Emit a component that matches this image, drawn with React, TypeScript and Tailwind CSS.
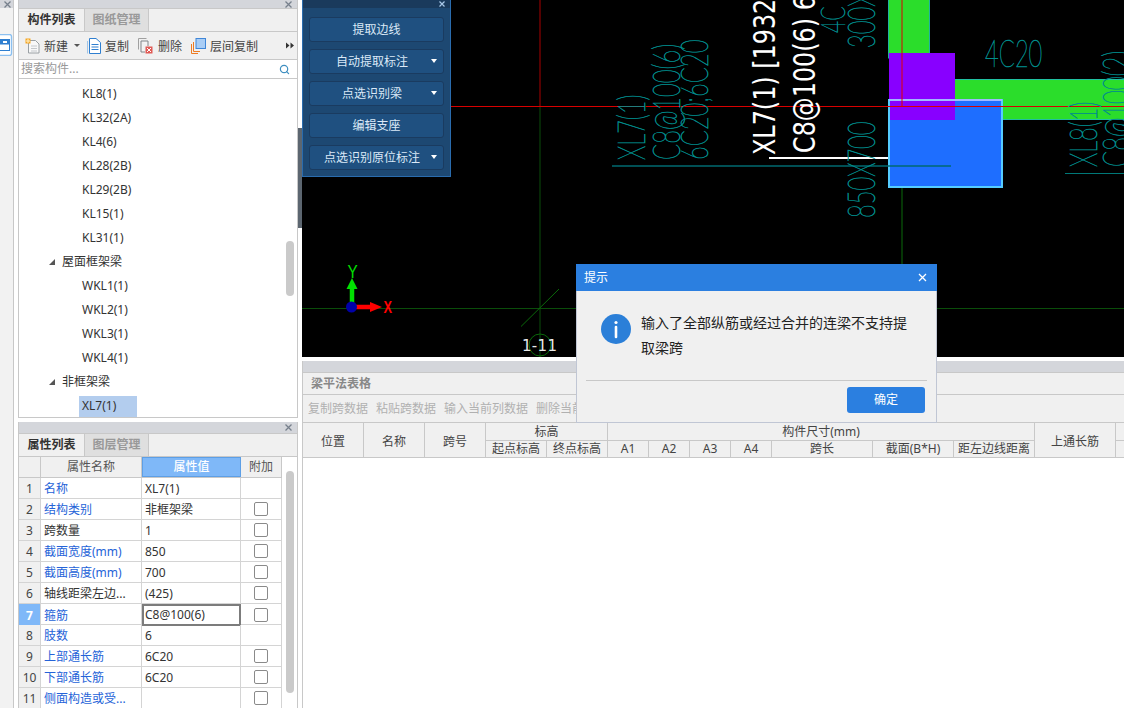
import { Search } from 'lucide-react';

const cjk = "font-['Noto_Sans','Noto_Sans_CJK_SC',sans-serif]";

const treeRows = [
  { label: 'KL8(1)' },
  { label: 'KL32(2A)' },
  { label: 'KL4(6)' },
  { label: 'KL28(2B)' },
  { label: 'KL29(2B)' },
  { label: 'KL15(1)' },
  { label: 'KL31(1)' },
  { label: '屋面框架梁', group: true },
  { label: 'WKL1(1)' },
  { label: 'WKL2(1)' },
  { label: 'WKL3(1)' },
  { label: 'WKL4(1)' },
  { label: '非框架梁', group: true },
  { label: 'XL7(1)', selected: true },
];

const props = [
  { n: 1, name: '名称', value: 'XL7(1)', blue: true, check: false },
  { n: 2, name: '结构类别', value: '非框架梁', blue: true, check: true },
  { n: 3, name: '跨数量', value: '1', blue: false, check: true },
  { n: 4, name: '截面宽度(mm)', value: '850', blue: true, check: true },
  { n: 5, name: '截面高度(mm)', value: '700', blue: true, check: true },
  { n: 6, name: '轴线距梁左边...', value: '(425)', blue: false, check: true },
  { n: 7, name: '箍筋', value: 'C8@100(6)', blue: true, check: true, active: true },
  { n: 8, name: '肢数', value: '6', blue: true, check: false },
  { n: 9, name: '上部通长筋', value: '6C20', blue: true, check: true },
  { n: 10, name: '下部通长筋', value: '6C20', blue: true, check: true },
  { n: 11, name: '侧面构造或受...', value: '', blue: true, check: true },
];

function CloseX({ className = '' }: { className?: string }) {
  return (
    <svg width="7" height="7" viewBox="0 0 7 7" className={className}>
      <path d="M0.5 0.5L6.5 6.5M6.5 0.5L0.5 6.5" stroke="#77808c" strokeWidth="1.3" />
    </svg>
  );
}

function PanelBar({ h = 'h-[8px]' }: { h?: string }) {
  return (
    <div className={`${h} shrink-0 bg-[#d4d6db] flex items-center justify-end pr-[5px]`}>
      <CloseX />
    </div>
  );
}

function Tabs({ active, other }: { active: string; other: string }) {
  return (
    <div className="h-[24px] shrink-0 flex bg-[#f0f0f0] border-y border-[#c8c8c8] text-[12px]">
      <div className="w-[65px] flex items-center justify-center font-bold text-[#333]">{active}</div>
      <div className="w-[65px] flex items-center justify-center font-bold text-[#999] bg-[#dfdfdf] border-x border-[#c8c8c8]">{other}</div>
    </div>
  );
}

function NewIcon() {
  return (
    <svg width="16" height="16" viewBox="0 0 16 16">
      <path d="M3.5 2.5H10.5L14 6V15H3.5Z" fill="#f8f8f8" stroke="#9aa0a4" />
      <path d="M6 8H12M6 10.5H12M6 13H12" stroke="#c4c8cc" />
      <rect x="0.5" y="0.5" width="5" height="5" fill="#f5a623" />
      <path d="M1 3H5M3 1V5" stroke="#fff2cc" />
    </svg>
  );
}

function CopyIcon() {
  return (
    <svg width="14" height="16" viewBox="0 0 14 16">
      <path d="M2.5 0.5H9L13.5 4.5V15.5H2.5Z" fill="#fff" stroke="#2f7fd0" />
      <path d="M0.5 3V15.5" stroke="#9fc4e8" />
      <path d="M4.5 6.5H11.5M4.5 9H11.5M4.5 11.5H11.5" stroke="#2f7fd0" />
    </svg>
  );
}

function DeleteIcon() {
  return (
    <svg width="15" height="16" viewBox="0 0 15 16">
      <path d="M0.5 0.5H8.5M0.5 0.5V11.5" stroke="#a0a0a0" fill="none" />
      <path d="M3 3H10V8M3 3V14H7" stroke="#808488" fill="#f4f4f4" />
      <rect x="7.5" y="8.5" width="7" height="7" fill="#e05a55" />
      <path d="M9 10L13 14M13 10L9 14" stroke="#fff" />
    </svg>
  );
}

function FloorCopyIcon() {
  return (
    <svg width="15" height="16" viewBox="0 0 15 16">
      <path d="M0.5 6V15.5H7" fill="none" stroke="#ee7b22" />
      <path d="M2.5 4V13.5H9" fill="none" stroke="#ee7b22" />
      <rect x="5" y="0.5" width="9.5" height="10" fill="#a9cdf5" stroke="#3f86d8" />
    </svg>
  );
}

function ComponentPanel() {
  return (
    <div className="h-[418px] shrink-0 flex flex-col border-x border-b border-[#c8c8c8]">
      <PanelBar />
      <Tabs active="构件列表" other="图纸管理" />
      <div className="h-[28px] shrink-0 flex items-center bg-[#f0f0f0] border-b border-[#c8c8c8] pl-[6px] pr-[3px] text-[12px] text-[#444]">
        <NewIcon />
        <span className="ml-[3px] pt-[2px]">新建</span>
        <span className="ml-[6px] w-0 h-0 border-x-[3px] border-x-transparent border-t-[3px] border-t-[#555]" />
        <span className="ml-[7px] flex items-center">
          <CopyIcon />
          <span className="ml-[4px] pt-[2px]">复制</span>
        </span>
        <span className="ml-[9px] flex items-center">
          <DeleteIcon />
          <span className="ml-[5px] pt-[2px]">删除</span>
        </span>
        <span className="ml-[9px] flex items-center">
          <FloorCopyIcon />
          <span className="ml-[4px] pt-[2px]">层间复制</span>
        </span>
        <svg width="8" height="7" viewBox="0 0 8 7" className="ml-auto mr-[0px]">
          <path d="M0 0.5L3.5 3.5L0 6.5ZM4.5 0.5L8 3.5L4.5 6.5Z" fill="#333" />
        </svg>
      </div>
      <div className="h-[19px] shrink-0 flex items-center bg-white border-b border-[#c8c8c8] pl-[2px] pr-[7px] text-[12px] text-[#999]">
        <span>搜索构件...</span>
        <Search size={11} strokeWidth={2.6} className="ml-auto text-[#3f8fc0]" />
      </div>
      <div className="relative flex-1 bg-white overflow-hidden pt-[3px]">
        {treeRows.map((row) => (
          <div key={row.label} className="h-[24px] flex items-center text-[12px] text-[#333]">
            {row.group ? (
              <div className="ml-[30px] flex items-center">
                <svg width="6" height="6" viewBox="0 0 6 6">
                  <path d="M6 0V6H0Z" fill="#555" />
                </svg>
                <span className="ml-[7px]">{row.label}</span>
              </div>
            ) : (
              <div className={`ml-[60px] h-[21px] w-[58px] flex items-center pl-[3px] ${row.selected ? 'bg-[#b3cdee]' : ''}`}>{row.label}</div>
            )}
          </div>
        ))}
        <div className="absolute left-[267px] top-[162px] w-[8px] h-[55px] rounded-[4px] bg-[#cacaca]" />
      </div>
    </div>
  );
}

function PropertyPanel() {
  return (
    <div className="relative flex-1 min-h-0 mt-[4px] flex flex-col border-x border-[#c8c8c8] overflow-hidden">
      <PanelBar h="h-[11px]" />
      <Tabs active="属性列表" other="图层管理" />
      <div className="flex-1 bg-white text-[12px]">
        <div className="w-[263px] h-[21px] grid grid-cols-[22px_101px_99px_41px] border-b border-[#c8c8c8] bg-[#f0f0f0] text-[#555]">
          <div className="border-r border-[#c8c8c8]" />
          <div className="border-r border-[#c8c8c8] flex items-center justify-center">属性名称</div>
          <div className="bg-[#7fb8f8] border border-[#5d9fe6] flex items-center justify-center text-white font-medium">属性值</div>
          <div className="border-r border-[#c8c8c8] flex items-center justify-center">附加</div>
        </div>
        {props.map((p) => (
          <div key={p.n} className="w-[263px] h-[21px] grid grid-cols-[22px_101px_99px_41px] border-b border-[#d4d4d4]">
            <div className={`border-r border-[#d4d4d4] flex items-center justify-center pt-[1px] ${p.active ? 'bg-[#7fb8f8] text-white font-bold' : 'bg-[#f0f0f0] text-[#444]'}`}>{p.n}</div>
            <div className={`border-r border-[#d4d4d4] flex items-center pl-[3px] pt-[1px] ${p.blue ? 'text-[#2563d8]' : 'text-[#333]'}`}>{p.name}</div>
            <div className={`flex items-center text-[#333] ${p.active ? 'border-2 border-[#7c7c7c] pl-[1px]' : 'border-r border-[#d4d4d4] pl-[3px] pt-[1px]'}`}>{p.value}</div>
            <div className="border-r border-[#d4d4d4] flex items-center justify-center">
              {p.check && <span className="w-[14px] h-[14px] rounded-[2px] border border-[#8a8a8a] bg-white" />}
            </div>
          </div>
        ))}
        <div className="absolute left-[267px] top-[49px] w-[8px] h-[222px] rounded-[4px] bg-[#cacaca]" />
      </div>
    </div>
  );
}

type CadProps = { x: number; y: number; size: number; sx: number; children: string; rotate?: boolean };

function CadText({ x, y, size, sx, children, rotate = true }: CadProps) {
  return (
    <text
      transform={`translate(${x} ${y}) ${rotate ? 'rotate(-90)' : ''} scale(${sx} 1)`}
      fontFamily="Lato, 'DejaVu Sans', sans-serif"
      fontWeight={100}
      fontSize={size}
      fill="#008c8c"
      stroke="#008c8c"
      strokeWidth="0.7"
    >
      {children}
    </text>
  );
}

function WhiteText({ x, y, children }: { x: number; y: number; children: string }) {
  return (
    <text transform={`translate(${x} ${y}) rotate(-90) scale(0.77 1)`} fontFamily="'DejaVu Sans', sans-serif" fontSize={31} fill="#ffffff">
      {children}
    </text>
  );
}

function Canvas() {
  return (
    <svg width="822" height="357" viewBox="302 0 822 357" className="block bg-black">
      <path d="M540 0V106" stroke="#a80000" />
      <path d="M540 106V357" stroke="#0a4d0a" />
      <path d="M302 308.5H1124" stroke="#0a4d0a" />
      <path d="M902 106V357" stroke="#0a6a0a" />
      <rect x="888.5" y="-2" width="41" height="60" fill="#2bdd2b" stroke="#20b0a0" />
      <rect x="950" y="79.5" width="176" height="40" fill="#2bdd2b" stroke="#20c0a0" />
      <rect x="889" y="100" width="113" height="87" fill="#1e6eff" />
      <rect x="889" y="53" width="66" height="67" fill="#8800ff" />
      <rect x="889" y="100" width="113" height="87" fill="none" stroke="#55ccff" strokeWidth="2" />
      <path d="M889 100H1002" stroke="#a0b8ff" strokeWidth="2" />
      <path d="M769 158H888" stroke="#ffffff" strokeWidth="2" />
      <path d="M612 166H951" stroke="#006a70" strokeWidth="1.5" />
      <path d="M1065 173.5H1124" stroke="#007878" />
      <path d="M902 0V106" stroke="#e00000" />
      <path d="M451 106.5H1124" stroke="#d80000" />

      <CadText x={645} y={160} size={37} sx={0.64}>XL7(1)</CadText>
      <CadText x={680} y={160} size={37} sx={0.64}>C8@100(6)</CadText>
      <CadText x={708} y={160} size={37} sx={0.64}>6C20;6C20</CadText>
      <CadText x={875} y={218} size={37} sx={0.64}>850X700</CadText>
      <CadText x={875} y={48} size={37} sx={0.64}>300X</CadText>
      <CadText x={845} y={33} size={33} sx={0.64}>4C</CadText>
      <CadText x={985} y={67} size={37} sx={0.64} rotate={false}>4C20</CadText>
      <CadText x={1097} y={167} size={37} sx={0.64}>XL8(1)</CadText>
      <CadText x={1130} y={167} size={37} sx={0.64}>C8@100(2)</CadText>

      <WhiteText x={775} y={155}>XL7(1) [1932]</WhiteText>
      <WhiteText x={815} y={153}>C8@100(6) 6C20</WhiteText>

      <path d="M521 326.5L559 289" stroke="#0a6a0a" />
      <circle cx="540" cy="345" r="11" fill="none" stroke="#0a6a0a" />
      <text x="522" y="351" fontFamily="'DejaVu Sans', sans-serif" fontSize="15" fill="#e8e8e8" textLength="35">1-11</text>

      <path d="M352 307V286" stroke="#00e000" strokeWidth="4.5" />
      <path d="M352 278L357.5 289H346.5Z" fill="#00e000" />
      <path d="M352 307H372" stroke="#ff0000" strokeWidth="4.5" />
      <path d="M382 307L370 302V312Z" fill="#ff0000" />
      <circle cx="351.5" cy="307" r="5.5" fill="#0000a8" />
      <text transform="translate(347.5 278) scale(0.85 1)" fontFamily="'Liberation Sans', sans-serif" fontSize="18" fill="#00e000">Y</text>
      <text transform="translate(383.5 313) scale(0.8 1)" fontFamily="'Liberation Sans', sans-serif" fontSize="16" fontWeight="bold" fill="#ff0000">X</text>
    </svg>
  );
}

function BeamButton({ label, caret }: { label: string; caret?: boolean }) {
  return (
    <div className="relative h-[25px] rounded-[3px] border border-[#1a3b60] bg-[#1f5080] flex items-center justify-center text-[12px] text-[#dbe9f7]">
      <span className={caret ? 'mr-[9px]' : ''}>{label}</span>
      {caret && <span className="absolute right-[6px] top-[9px] w-0 h-0 border-x-[3.5px] border-x-transparent border-t-[4px] border-t-white" />}
    </div>
  );
}

function BeamToolbar() {
  return (
    <div className="absolute left-0 top-0 w-[149px] h-[177px] bg-[#1d4872] border-x border-b border-[#2a6cae] flex flex-col">
      <div className="h-[8px] bg-[#1a3a5c] flex items-center justify-end pr-[5px]">
        <svg width="6" height="6" viewBox="0 0 6 6">
          <path d="M0.5 0.5L5.5 5.5M5.5 0.5L0.5 5.5" stroke="#a8c8e8" strokeWidth="1.2" />
        </svg>
      </div>
      <div className="flex flex-col gap-[7px] px-[6px] pt-[9px]">
        <BeamButton label="提取边线" />
        <BeamButton label="自动提取标注" caret />
        <BeamButton label="点选识别梁" caret />
        <BeamButton label="编辑支座" />
        <BeamButton label="点选识别原位标注" caret />
      </div>
    </div>
  );
}

function HeadCell({ children, className = '' }: { children?: string; className?: string }) {
  return <div className={`border-r border-b border-[#c8c8c8] flex items-center justify-center ${className}`}>{children}</div>;
}

function BeamTable() {
  return (
    <div className="flex-1 min-h-0 mt-[4px] flex flex-col border-l border-[#c8c8c8] bg-white">
      <div className="h-[11px] shrink-0 bg-[#d4d6db]" />
      <div className="h-[23px] shrink-0 flex items-center bg-[#f0f0f0] border-y border-[#c8c8c8] pl-[8px] text-[12px] font-bold text-[#888]">梁平法表格</div>
      <div className="h-[28px] shrink-0 flex items-center gap-[8px] bg-[#f0f0f0] border-b border-[#c8c8c8] pl-[5px] text-[12px] text-[#b0b0b0]">
        <span>复制跨数据</span>
        <span>粘贴跨数据</span>
        <span>输入当前列数据</span>
        <span>删除当前列数据</span>
      </div>
      <div className="h-[35px] shrink-0 grid grid-cols-[61px_61px_61px_61px_61px_41px_41px_41px_41px_101px_81px_81px_81px_9px] grid-rows-[18px_17px] bg-[#f0f0f0] text-[12px] text-[#444]">
        <HeadCell className="row-span-2 pt-[3px]">位置</HeadCell>
        <HeadCell className="row-span-2 pt-[3px]">名称</HeadCell>
        <HeadCell className="row-span-2 pt-[3px]">跨号</HeadCell>
        <HeadCell className="col-span-2 pt-[1px]">标高</HeadCell>
        <HeadCell className="col-span-7 pt-[1px]">构件尺寸(mm)</HeadCell>
        <HeadCell className="row-span-2 pt-[3px]">上通长筋</HeadCell>
        <HeadCell />
        <HeadCell>起点标高</HeadCell>
        <HeadCell>终点标高</HeadCell>
        <HeadCell>A1</HeadCell>
        <HeadCell>A2</HeadCell>
        <HeadCell>A3</HeadCell>
        <HeadCell>A4</HeadCell>
        <HeadCell>跨长</HeadCell>
        <HeadCell>截面(B*H)</HeadCell>
        <HeadCell className="whitespace-nowrap">距左边线距离</HeadCell>
        <HeadCell />
      </div>
    </div>
  );
}

function NoticeDialog() {
  return (
    <div className="absolute left-[576px] top-[264px] w-[361px] h-[159px] bg-[#f0f0f0] border border-[#c0c6d4] flex flex-col">
      <div className="h-[27px] -mx-px -mt-px shrink-0 bg-[#2b7fe0] flex items-center justify-between pl-[8px] pr-[10px] text-[12px] text-white">
        <span>提示</span>
        <svg width="9" height="9" viewBox="0 0 9 9">
          <path d="M1 1L8 8M8 1L1 8" stroke="#fff" strokeWidth="1.3" />
        </svg>
      </div>
      <div className="h-[89px] shrink-0 flex pl-[24px] pr-[20px] pt-[21px]">
        <svg width="30" height="32" viewBox="0 0 30 32" className="shrink-0 mt-[1px]">
          <circle cx="15" cy="16" r="15" fill="#2b7fd8" />
          <circle cx="15" cy="9.5" r="1.6" fill="#fff" />
          <path d="M15 14V24" stroke="#fff" strokeWidth="2.6" strokeLinecap="round" />
        </svg>
        <p className="ml-[10px] -mt-[2px] w-[280px] text-[14px] leading-[25px] text-[#222]">输入了全部纵筋或经过合并的连梁不支持提取梁跨</p>
      </div>
      <div className="mx-[9px] border-t border-[#c8c8c8]" />
      <div className="flex justify-end pr-[11px] pt-[6px]">
        <div className="w-[78px] h-[26px] rounded-[3px] bg-[#2b7fe0] flex items-center justify-center text-[12px] text-white">确定</div>
      </div>
    </div>
  );
}

export default function App() {
  return (
    <div className={`relative w-[1124px] h-[708px] overflow-hidden flex bg-white ${cjk}`}>
      <div className="w-[18px] shrink-0 flex">
        <div className="w-[14px] flex flex-col border-r border-[#c8c8c8] bg-[#f2f2f2]">
          <div className="h-[8px] bg-[#d4d6db] flex items-center justify-end pr-[2px]">
            <CloseX />
          </div>
          <div className="h-[26px]" />
          <svg width="13" height="22" viewBox="0 0 13 22">
            <rect x="-6" y="0.5" width="17.5" height="21" rx="2" fill="#ffffff" stroke="#8cc0f0" strokeWidth="1.4" />
            <rect x="-5" y="5.5" width="14.5" height="11" fill="#ffffff" stroke="#2f7fd0" />
            <rect x="-5" y="5.5" width="14.5" height="5" fill="#2f7fd0" />
            <rect x="3" y="7" width="4" height="2" fill="#fff" />
          </svg>
        </div>
      </div>
      <div className="w-[280px] shrink-0 flex flex-col">
        <ComponentPanel />
        <PropertyPanel />
      </div>
      <div className="w-[4px] shrink-0 flex flex-col">
        <div className="h-[128px]" />
        <div className="h-[100px] bg-[#5c6670]" />
      </div>
      <div className="relative flex-1 min-w-0 flex flex-col">
        <div className="relative h-[357px] shrink-0 overflow-hidden">
          <Canvas />
          <BeamToolbar />
        </div>
        <BeamTable />
      </div>
      <NoticeDialog />
    </div>
  );
}
